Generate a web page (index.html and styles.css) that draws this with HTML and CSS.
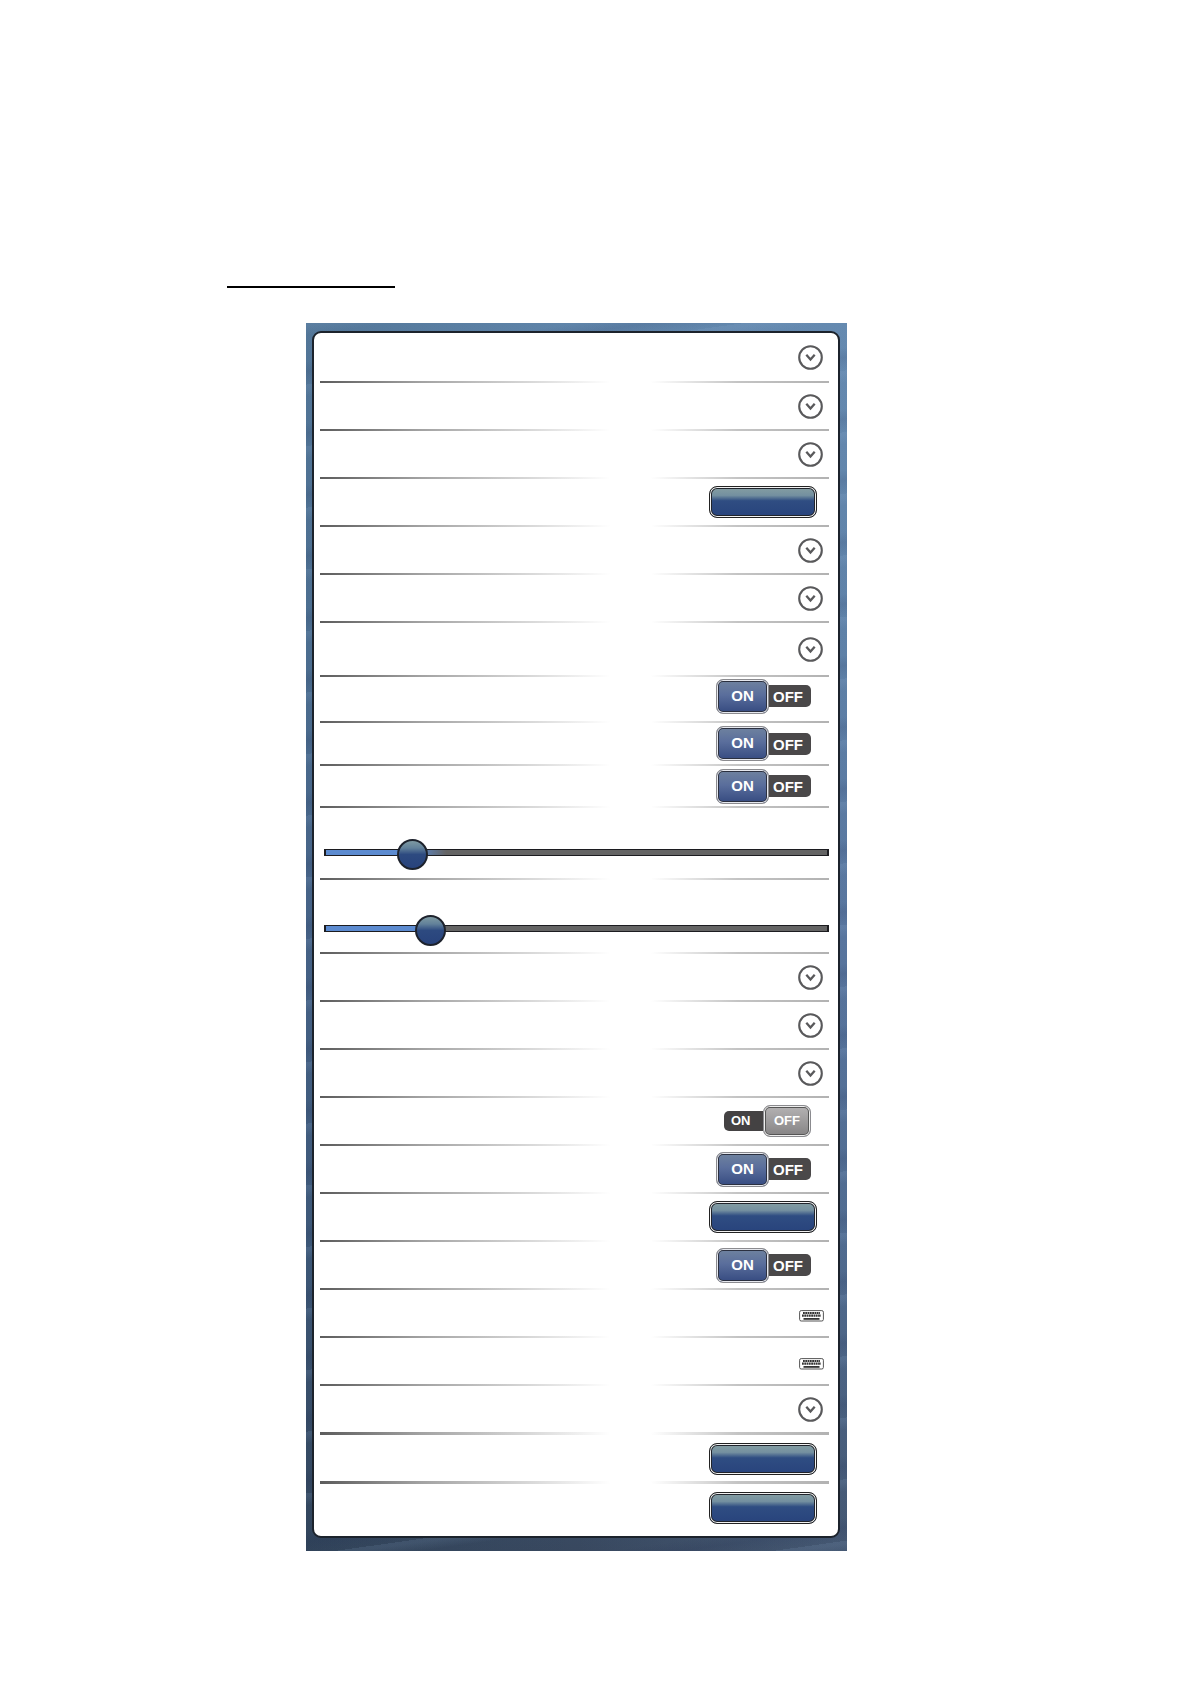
FILE: index.html
```html
<!DOCTYPE html>
<html lang="en">
<head>
<meta charset="utf-8">
<title>Settings</title>
<link rel="stylesheet" href="styles.css">
</head>
<body>
<svg width="0" height="0" class="sprite" aria-hidden="true">
  <symbol id="chevron" viewBox="0 0 25 25">
    <circle cx="12.5" cy="12.5" r="11.3" fill="#fff" stroke="#59595b" stroke-width="2.1"/>
    <path d="M8.3 9.7l4.2 4.7 4.2-4.7" fill="none" stroke="#59595b" stroke-width="2.3"/>
  </symbol>
  <symbol id="keyboard" viewBox="0 0 25 12">
    <rect x=".6" y=".6" width="23.8" height="10.4" rx="1.6" fill="#fff" stroke="#555" stroke-width="1"/>
    <path d="M4 2.9h17" stroke="#333" stroke-width="2" stroke-dasharray="1.8 .5"/>
    <path d="M3 5.7h19" stroke="#333" stroke-width="2.2" stroke-dasharray="1.8 .5"/>
    <path d="M4.5 8.9h16" stroke="#333" stroke-width="1.8"/>
  </symbol>
</svg>
<main class="page">
  <hr class="rule">
  <section class="frame">
    <ul class="list">
      <li class="row row-first"><button class="expand" aria-label="Expand"><svg><use href="#chevron"/></svg></button></li>
      <li class="row"><button class="expand" aria-label="Expand"><svg><use href="#chevron"/></svg></button></li>
      <li class="row"><button class="expand" aria-label="Expand"><svg><use href="#chevron"/></svg></button></li>
      <li class="row"><button class="action" aria-label="Set"></button></li>
      <li class="row"><button class="expand" aria-label="Expand"><svg><use href="#chevron"/></svg></button></li>
      <li class="row"><button class="expand" aria-label="Expand"><svg><use href="#chevron"/></svg></button></li>
      <li class="row row-tall"><button class="expand" aria-label="Expand"><svg><use href="#chevron"/></svg></button></li>
      <li class="row row-raised"><label class="switch"><input type="checkbox" checked><span class="on">ON</span><span class="off">OFF</span></label></li>
      <li class="row row-short"><label class="switch"><input type="checkbox" checked><span class="on">ON</span><span class="off">OFF</span></label></li>
      <li class="row row-shorter"><label class="switch"><input type="checkbox" checked><span class="on">ON</span><span class="off">OFF</span></label></li>
      <li class="row row-slider"><input class="slider slider-soft" type="range" min="0" max="100" value="15" aria-label="Level"></li>
      <li class="row row-slider row-slider-tall"><input class="slider" type="range" min="0" max="100" value="19" aria-label="Level"></li>
      <li class="row"><button class="expand" aria-label="Expand"><svg><use href="#chevron"/></svg></button></li>
      <li class="row"><button class="expand" aria-label="Expand"><svg><use href="#chevron"/></svg></button></li>
      <li class="row"><button class="expand" aria-label="Expand"><svg><use href="#chevron"/></svg></button></li>
      <li class="row"><label class="switch"><input type="checkbox"><span class="on">ON</span><span class="off">OFF</span></label></li>
      <li class="row"><label class="switch"><input type="checkbox" checked><span class="on">ON</span><span class="off">OFF</span></label></li>
      <li class="row"><button class="action" aria-label="Set"></button></li>
      <li class="row"><label class="switch"><input type="checkbox" checked><span class="on">ON</span><span class="off">OFF</span></label></li>
      <li class="row row-keys"><button class="keys" aria-label="Keyboard"><svg><use href="#keyboard"/></svg></button></li>
      <li class="row row-keys"><button class="keys" aria-label="Keyboard"><svg><use href="#keyboard"/></svg></button></li>
      <li class="row row-thick"><button class="expand" aria-label="Expand"><svg><use href="#chevron"/></svg></button></li>
      <li class="row row-thick"><button class="action" aria-label="Set"></button></li>
      <li class="row row-last"><button class="action" aria-label="Set"></button></li>
    </ul>
  </section>
</main>
</body>
</html>
```
FILE: styles.css
```css
* { box-sizing: border-box; }

body {
  margin: 0;
  background: #fff;
  font-family: "Liberation Sans", Arial, sans-serif;
}

.sprite { position: absolute; }

.page {
  max-width: 847px;
  padding: 286px 0 133px 227px;
}

.rule {
  width: 168px;
  height: 2px;
  margin: 0 0 35px;
  border: 0;
  background: #000;
}

.frame {
  margin-left: 79px;
  padding: 8px 7px 13px 6px;
  background:
    repeating-linear-gradient(172deg, rgba(150, 180, 215, .12) 0 3px, transparent 12px 38px, rgba(20, 30, 70, .1) 48px, transparent 61px),
    linear-gradient(90deg, rgba(20, 50, 70, .18), transparent 50%, rgba(130, 165, 210, .16)),
    linear-gradient(#6085aa, #587ba0 25%, #506c94 50%, #466083 75%, #38485f);
}

.list {
  margin: 0;
  padding: 0;
  list-style: none;
  background: #fff;
  border: 2px solid #1c232c;
  border-radius: 9px;
}

.row {
  display: flex;
  align-items: center;
  justify-content: flex-end;
  height: 48px;
  padding: 0 15px 2px;
  background:
    linear-gradient(90deg, #5c5c5c, #a3a3a3 20%, #d0d0d0 38%, #fff 57%, #fff 65%, #c4c4c4 82%, #b2b2b2)
    6px 100% / calc(100% - 15px) 2px no-repeat;
}

.row-first { height: 50px; }
.row-tall { height: 54px; }
.row-raised { height: 46px; padding-bottom: 8px; }
.row-short { height: 43px; }
.row-shorter { height: 42px; }
.row-slider { height: 72px; align-items: flex-end; padding: 0 9px 12px 10px; }
.row-slider-tall { height: 74px; padding-bottom: 10px; }
.row-keys { padding: 4px 14px 0; }
.row-thick { height: 49px; background-size: calc(100% - 15px) 3px; }
.row-last { height: 52px; padding-bottom: 4px; background: none; }

button {
  padding: 0;
  border: 0;
  background: none;
}

.expand, .expand svg {
  display: block;
  width: 25px;
  height: 25px;
}

.keys, .keys svg {
  display: block;
  width: 25px;
  height: 12px;
}

.action {
  width: 108px;
  height: 32px;
  margin-right: 6px;
  border: 1px solid #222;
  border-radius: 8px;
  background: linear-gradient(#869fa2, #7490a0 28%, #2f4d82 46%, #28437c);
  box-shadow: inset 0 0 0 1px #f2f2f2, inset 0 0 0 2px #20242c;
}

.switch {
  position: relative;
  display: flex;
  align-items: center;
  margin-right: 12px;
  color: #fff;
  font-size: 15px;
  font-weight: bold;
  line-height: 20px;
  text-align: center;
}

.switch input {
  position: absolute;
  inset: 0;
  width: 100%;
  height: 100%;
  margin: 0;
  opacity: 0;
}

.on {
  width: 53px;
  padding: 6px 0 7px;
  border: 1px solid #8b8b8f;
  border-radius: 7px;
  background: linear-gradient(#70839f, #5a6e9c 45%, #354a80);
  box-shadow: inset 0 0 0 1px #e6e8ee, inset 0 0 0 2px #2b3040;
}

.off {
  width: 42px;
  padding: 2px 4px 0;
  border-radius: 0 5px 5px 0;
  background: #4a4849;
  text-align: left;
}

.switch input:not(:checked) ~ span { font-size: 13px; }

.switch input:not(:checked) ~ .on {
  width: 39px;
  padding: 0 7px;
  border: 0;
  border-radius: 5px 0 0 5px;
  background: #444243;
  box-shadow: none;
  text-align: left;
}

.switch input:not(:checked) ~ .off {
  width: 48px;
  padding: 5px 0;
  border: 1px solid #8b8b8f;
  border-radius: 7px;
  background: linear-gradient(#b5b3b4, #858384);
  box-shadow: inset 0 0 0 1px #eee, inset 0 0 0 2px #555;
  text-align: center;
}

.slider {
  appearance: none;
  width: 100%;
  height: 32px;
  margin: 0;
  background: none;
}

.slider::-webkit-slider-runnable-track {
  box-sizing: border-box;
  height: 7px;
  border: solid #1c1c20;
  border-width: 1px 2px;
  background: linear-gradient(90deg, #5c8bd0 22%, #646464 22%);
}

.slider-soft::-webkit-slider-runnable-track {
  background: linear-gradient(90deg, #5c8bd0 18%, #646464 24%);
}

.slider::-webkit-slider-thumb {
  appearance: none;
  box-sizing: border-box;
  width: 31px;
  height: 31px;
  margin-top: -11px;
  border: 2px solid #1d222c;
  border-radius: 50%;
  background: linear-gradient(#7e9aa2, #62819a 26%, #2d4a80 50%, #28437c);
}
```
